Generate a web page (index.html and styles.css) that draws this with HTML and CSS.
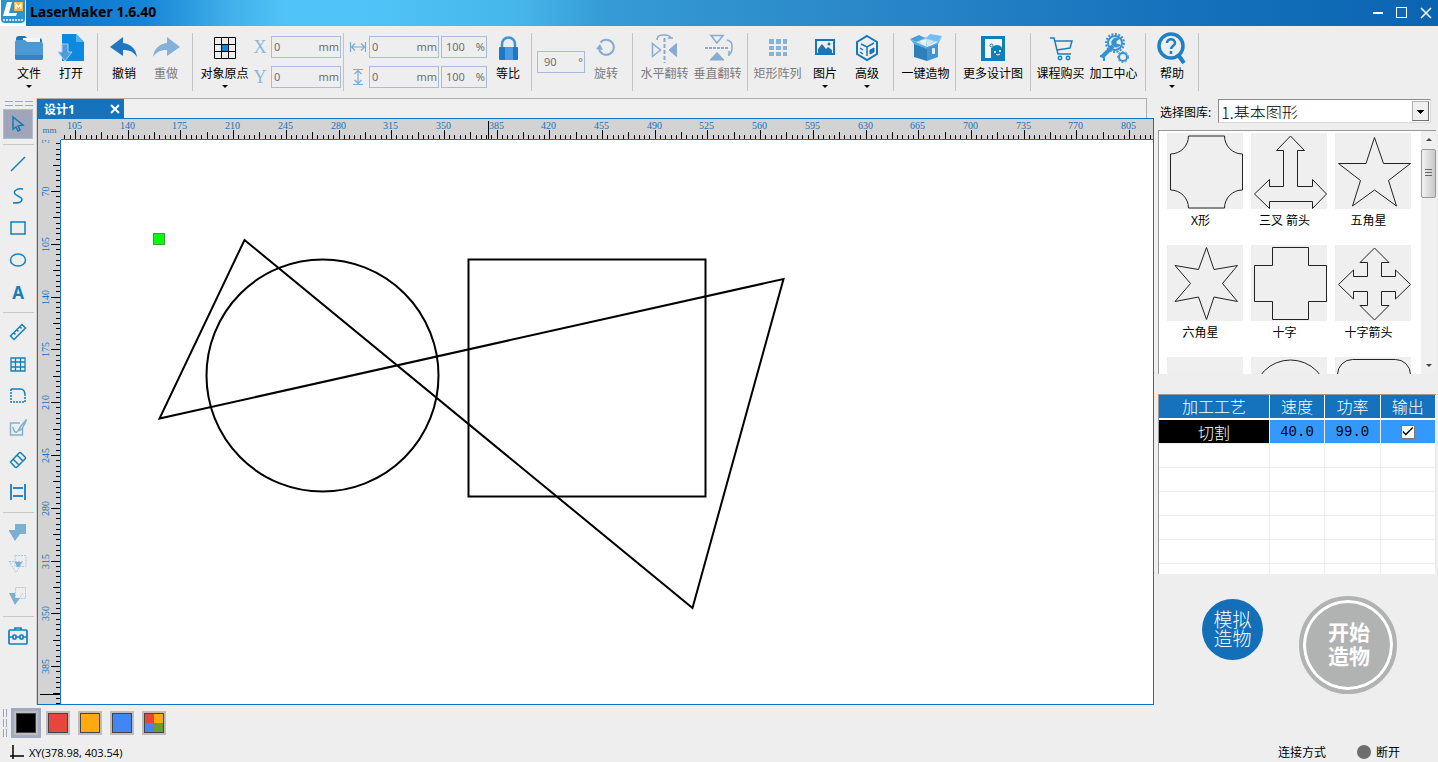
FILE: index.html
```html
<!DOCTYPE html>
<html lang="zh-CN">
<head>
    <meta charset="UTF-8">
    <meta name="viewport" content="width=device-width, initial-scale=1.0">
    <title>LaserMaker 1.6.40</title>
    <link rel="stylesheet" href="styles.css">
</head>
<body>

<header class="titlebar">
    <svg class="logo" width="26" height="26" viewBox="0 0 26 26">
        <rect width="26" height="26" fill="#fff"/>
        <rect x="1" y="-3" width="24" height="26" rx="4" fill="#2c93cf"/>
        <path d="M7 2h5l-3 11h8l-1 3H3z" fill="#fff"/>
        <rect x="14" y="2" width="9" height="9" fill="#f0b848"/>
        <path d="M16 9V4l2.500 3L21 4v5" fill="none" stroke="#fff" stroke-width="1.300"/>
        <path d="M3 20h20" stroke="#bfe2f5" stroke-width="2" stroke-dasharray="2 1"/>
    </svg>
    <h1>LaserMaker 1.6.40</h1>
    <div class="window-buttons">
        <button aria-label="最小化"><svg width="12" height="12"><path d="M1 6h10" stroke="#fff" stroke-width="2"/></svg></button>
        <button aria-label="最大化"><svg width="12" height="12"><rect x="0.500" y="0.500" width="10" height="10" fill="none" stroke="#fff"/></svg></button>
        <button aria-label="关闭"><svg width="12" height="12"><path d="M1 1l10 10M11 1L1 11" stroke="#fff" stroke-width="1.500"/></svg></button>
    </div>
</header>

<!-- 顶部工具栏 -->
<nav class="toolbar">
    <button class="tool">
        <svg width="30" height="30" viewBox="0 0 30 30">
            <path d="M2 6q0-3 3-3h6l2 2h12q3 0 3 3v6H2z" fill="#1c75b8"/>
            <rect x="9" y="5" width="17" height="5" fill="#f3f8fc"/>
            <path d="M1 9q0-2 2-2h8l2 2h14q2 0 2 2v14q0 2-2 2H3q-2 0-2-2z" fill="#4b9ad6"/>
            <path d="M1 22h28v3q0 2-2 2H3q-2 0-2-2z" fill="#3583c2"/>
        </svg>
        <span>文件</span><i class="caret"></i>
    </button>
    <button class="tool">
        <svg width="30" height="30" viewBox="0 0 30 30">
            <path d="M6 1h14l8 8v19H6z" fill="#0d8ade"/>
            <path d="M20 1v8h8z" fill="#57b2ec"/>
            <path d="M6 11h6v8h4l-7 9-7-9h4z" fill="#4d9bdd" stroke="#a9d0ee"/>
        </svg>
        <span>打开</span>
    </button>
    <i class="divider"></i>
    <button class="tool">
        <svg width="30" height="30" viewBox="0 0 30 30"><path d="M1 14L14 4v6c8 1 13 6 14 14-4-6-8-7-14-7v6z" fill="#2176bf"/></svg>
        <span>撤销</span>
    </button>
    <button class="tool off">
        <svg width="30" height="30" viewBox="0 0 30 30"><path d="M29 14L16 4v6C8 11 3 16 2 24c4-6 8-7 14-7v6z" fill="#83b1d9"/></svg>
        <span>重做</span>
    </button>
    <i class="divider"></i>
    <button class="tool wide">
        <svg width="30" height="30" viewBox="0 0 30 30">
            <rect x="11" y="12" width="7" height="7" fill="#0d8ade"/>
            <path d="M4.500 4.500h21v21h-21zM11.500 4v22M18.500 4v22M4 11.500h22M4 18.500h22" fill="none" stroke="#000"/>
        </svg>
        <span>对象原点</span><i class="caret"></i>
    </button>
    <div class="fields">
        <div class="row">
            <label class="axis" for="posX">X</label>
            <div class="field"><input id="posX" type="text" value="0"><span>mm</span></div>
        </div>
        <div class="row">
            <label class="axis" for="posY">Y</label>
            <div class="field"><input id="posY" type="text" value="0"><span>mm</span></div>
        </div>
    </div>
    <i class="divider tight"></i>
    <div class="fields">
        <div class="row">
            <label class="size" for="sizeW"><svg width="18" height="18" viewBox="0 0 18 18"><path d="M1.500 4v10M16.500 4v10M3 9h12M6 5.500L2.500 9 6 12.500M12 5.500L15.500 9 12 12.500" fill="none" stroke="#79acd6" stroke-width="1.200"/></svg></label>
            <div class="field"><input id="sizeW" type="text" value="0" aria-label="宽度"><span>mm</span></div>
            <div class="field percent"><input type="text" value="100" aria-label="宽度比例"><span>%</span></div>
        </div>
        <div class="row">
            <label class="size" for="sizeH"><svg width="18" height="18" viewBox="0 0 18 18"><path d="M4 1.500h10M4 16.500h10M9 3v12M5.500 6L9 2.500 12.500 6M5.500 12L9 15.500l3.500-3.500" fill="none" stroke="#79acd6" stroke-width="1.200"/></svg></label>
            <div class="field"><input id="sizeH" type="text" value="0" aria-label="高度"><span>mm</span></div>
            <div class="field percent"><input type="text" value="100" aria-label="高度比例"><span>%</span></div>
        </div>
    </div>
    <button class="tool">
        <svg width="30" height="30" viewBox="0 0 30 30">
            <path d="M9 16V11a6.500 6.500 0 0 1 13 0v5" fill="none" stroke="#3f93d2" stroke-width="2.500"/>
            <rect x="6" y="14" width="19" height="13" rx="1" fill="#1f78c6"/>
            <rect x="12" y="14" width="8" height="13" fill="#4a9ae0"/>
        </svg>
        <span>等比</span>
    </button>
    <i class="divider tight"></i>
    <div class="field angle"><input type="text" value="90" aria-label="旋转角度"><span>°</span></div>
    <button class="tool off">
        <svg width="30" height="30" viewBox="0 0 30 30"><path d="M9.500 9.500a7.500 7.500 0 1 1-1.500 6.500" fill="none" stroke="#87abd2" stroke-width="2"/><path d="M5 16l4-5 3 6z" fill="#87abd2"/></svg>
        <span>旋转</span>
    </button>
    <i class="divider"></i>
    <button class="tool wide off">
        <svg width="30" height="30" viewBox="0 0 30 30" stroke="#87abd2">
            <path d="M14.500 5v25" stroke-width="2" stroke-dasharray="4 2"/>
            <path d="M2.500 10.500l8 6.500-8 6.500z" fill="none" stroke-width="1.500"/>
            <path d="M26.500 10.500L19 17l7.500 6.500z" fill="#87abd2"/>
            <path d="M7 7c0-5 4-5 7-5s6 0 7 3m-3 0h5" fill="none" stroke-width="1.500"/>
        </svg>
        <span>水平翻转</span>
    </button>
    <button class="tool wide off">
        <svg width="30" height="30" viewBox="0 0 30 30" stroke="#87abd2">
            <path d="M2 15h24" stroke-width="2" stroke-dasharray="3 1"/>
            <path d="M8 2.500h12L14 10z" fill="none" stroke-width="1.500"/>
            <path d="M7 27h14l-7-7.500z" fill="#87abd2"/>
            <path d="M24 7c5 1 5 4 5 8s-1 6-4 7m1-4v5" fill="none" stroke-width="1.500"/>
        </svg>
        <span>垂直翻转</span>
    </button>
    <i class="divider near"></i>
    <button class="tool wide off">
        <svg width="30" height="30" viewBox="0 0 30 30" fill="#86b2d8">
            <path d="M6 6h5v5H6zM13 6h5v5h-5zM20 6h4v5h-4zM6 13h5v4H6zM13 13h5v4h-5zM20 13h4v4h-4zM6 19h5v4H6zM13 19h5v4h-5zM20 19h4v4h-4z"/>
        </svg>
        <span>矩形阵列</span>
    </button>
    <button class="tool">
        <svg width="30" height="30" viewBox="0 0 30 30">
            <rect x="6" y="7" width="18" height="14" fill="none" stroke="#1775bc" stroke-width="2"/>
            <path d="M8 20v-4l4-5 4 5 2-2 4 3v3z" fill="#1775bc"/><circle cx="19" cy="11" r="1.500" fill="#1775bc"/>
        </svg>
        <span>图片</span><i class="caret"></i>
    </button>
    <button class="tool">
        <svg width="30" height="30" viewBox="0 0 30 30" fill="none" stroke="#1775bc" stroke-width="2">
            <path d="M15 3l10 6v12l-10 6-10-6V9z"/>
            <path d="M9 11l6 3 7-4M15 14v9M8 15l3 2M8 19l3 2" stroke-width="1.500"/>
            <path d="M18 17l4-2v4l-4 2z" fill="#1775bc" stroke-width="1"/>
        </svg>
        <span>高级</span><i class="caret"></i>
    </button>
    <i class="divider"></i>
    <button class="tool wide">
        <svg width="34" height="30" viewBox="0 0 34 30">
            <path d="M7 8l9-4 11 4-9 5z" fill="#9cc8e8"/>
            <path d="M5 10l13 4v14L5 24z" fill="#2f7fbc"/>
            <path d="M18 14l11-4v14l-11 4z" fill="#4794d0"/>
            <path d="M10 8l7-2v8z" fill="#e6f2fa"/><path d="M17 6l8 2-7 6z" fill="#cfe5f5"/>
            <path d="M1 6l9-4 6 3-9 4z" fill="#4a9fda"/><path d="M17 5l4-4 12 2-4 6z" fill="#6ec0f7"/>
            <path d="M7 9L1 6l4 5 13 5v-2zM29 9l4-5-4 7-11 4z" fill="#5aaee8"/>
            <rect x="23" y="15" width="3" height="6" rx="1" fill="#e4f1fb"/>
        </svg>
        <span>一键造物</span>
    </button>
    <i class="divider near"></i>
    <button class="tool wider">
        <svg width="30" height="30" viewBox="0 0 30 30">
            <rect x="3" y="3" width="24" height="25" fill="#107fb8"/>
            <path d="M7 6h17v9H13v10H7z" fill="#f1f6f9"/>
            <circle cx="19" cy="18" r="6" fill="#107fb8"/><circle cx="13.500" cy="12.500" r="1.500" fill="none" stroke="#107fb8"/>
            <circle cx="17" cy="19" r="1" fill="#fff"/><circle cx="22" cy="18" r="1" fill="#fff"/><path d="M18 21.500q2 1 4-0.500" fill="none" stroke="#fff"/>
        </svg>
        <span>更多设计图</span>
    </button>
    <i class="divider near"></i>
    <button class="tool wide">
        <svg width="30" height="30" viewBox="0 0 30 30" fill="none" stroke="#1a80bd" stroke-width="1.500">
            <path d="M4 5h4l4 16h13M9 8h17l-2 7-13 2"/>
            <circle cx="14" cy="25" r="1.700"/><circle cx="22" cy="25" r="1.700"/>
        </svg>
        <span>课程购买</span>
    </button>
    <button class="tool wide">
        <svg width="32" height="30" viewBox="0 0 32 30" fill="none" stroke="#3592d2">
            <circle cx="17" cy="10" r="7" stroke-width="2"/>
            <circle cx="17" cy="10" r="9" stroke-width="2" stroke-dasharray="2 1.500"/>
            <path d="M4 24l11-11" stroke-width="4"/>
            <path d="M2 23l4 1v4" stroke-width="2"/><path d="M21 6a4.500 4.500 0 1 0 1 6l-4-1v-3z" fill="#3592d2"/>
            <circle cx="25" cy="24" r="4" stroke-width="2"/>
            <circle cx="25" cy="24" r="5.500" stroke-dasharray="2 2"/>
        </svg>
        <span>加工中心</span>
    </button>
    <i class="divider"></i>
    <button class="tool">
        <svg width="32" height="34" viewBox="0 0 32 34" fill="none" stroke="#1f80c4">
            <circle cx="15" cy="15" r="12" stroke-width="3.500"/>
            <path d="M23 25l5 7" stroke-width="4"/>
            <path d="M11 12c0-5 8-5 8 0 0 3-4 3-4 6" stroke-width="2.500"/><path d="M15 20v3" stroke-width="2.500"/>
        </svg>
        <span>帮助</span><i class="caret"></i>
    </button>
    <i class="divider"></i>
</nav>

<main class="main">
    <!-- 左侧绘图工具 -->
    <aside class="sidebar">
        <i class="grip"></i>
        <button class="side-tool selected" aria-label="选择"><svg width="18" height="18" viewBox="0 0 18 18"><path d="M4 2v12l3-2 2 4 2-1-2-4 5-1z" fill="none" stroke="#0d7bb6" stroke-width="1.500"/></svg></button>
        <i class="rule"></i>
        <button class="side-tool" aria-label="直线"><svg width="18" height="18" viewBox="0 0 18 18"><path d="M2 16L16 2" stroke="#1380bb" stroke-width="1.500"/></svg></button>
        <button class="side-tool" aria-label="曲线"><svg width="18" height="18" viewBox="0 0 18 18"><path d="M14 2C8 1 4 4 6 7c2 2 6 3 7 5 0 4-4 4-9 4" fill="none" stroke="#1380bb" stroke-width="1.500"/></svg></button>
        <button class="side-tool" aria-label="矩形"><svg width="18" height="18" viewBox="0 0 18 18"><rect x="2" y="3" width="14" height="12" fill="none" stroke="#1380bb" stroke-width="1.500"/></svg></button>
        <button class="side-tool" aria-label="椭圆"><svg width="18" height="18" viewBox="0 0 18 18"><ellipse cx="9" cy="9" rx="7.500" ry="6" fill="none" stroke="#1380bb" stroke-width="1.500"/></svg></button>
        <button class="side-tool letter" aria-label="文本">A</button>
        <i class="rule"></i>
        <button class="side-tool" aria-label="测量"><svg width="18" height="18" viewBox="0 0 18 18"><path d="M1.500 13L13 1.500 16.500 5 5 16.500zM5 10l1.500 1.500M8 7l1.500 1.500M11 4l1.500 1.500" fill="none" stroke="#1380bb" stroke-width="1.500"/></svg></button>
        <button class="side-tool" aria-label="网格"><svg width="18" height="18" viewBox="0 0 18 18"><path d="M2 3h14v13H2zM2 7h14M2 12h14M6.500 3v13M11.500 3v13" fill="none" stroke="#1380bb" stroke-width="1.300"/></svg></button>
        <button class="side-tool" aria-label="圆角"><svg width="18" height="18" viewBox="0 0 18 18" fill="none" stroke="#1380bb" stroke-width="1.500"><path d="M2 2v13h14V8" stroke-dasharray="2 1"/><path d="M2 2h9q5 0 5 6"/></svg></button>
        <button class="side-tool" aria-label="编辑节点"><svg width="18" height="18" viewBox="0 0 18 18" fill="none" stroke="#7fb2d3" stroke-width="1.500"><path d="M11 4H1.500v12h12V9M4 8q1 6 4 5"/><path d="M17 1l-5 6-3 5 4-2 4-8z"/></svg></button>
        <button class="side-tool" aria-label="橡皮擦"><svg width="18" height="18" viewBox="0 0 18 18"><path d="M1.500 11L10 2q1-1 2 0l4 4q1 1 0 2l-8 8q-1 1-2 0zM4 8l6 6M8 4l6 6" fill="none" stroke="#1380bb" stroke-width="1.500"/></svg></button>
        <button class="side-tool" aria-label="平行线"><svg width="18" height="18" viewBox="0 0 18 18"><path d="M2 1v16M16 1v16M4 5h10M4 13h10" stroke="#2a86cb" stroke-width="2"/></svg></button>
        <i class="rule"></i>
        <button class="side-tool" aria-label="并集"><svg width="20" height="20" viewBox="0 0 20 20"><path d="M7 2h11v10h-6l-5 7-6-10V8h6z" fill="#79b0d3"/></svg></button>
        <button class="side-tool" aria-label="交集"><svg width="20" height="20" viewBox="0 0 20 20"><path d="M7 1.500h11v11H7zM1 7.500h14l-7 11z" fill="none" stroke="#a6c9df" stroke-dasharray="2 1"/><path d="M7 8h7l-3 5H9z" fill="#79b0d3"/></svg></button>
        <button class="side-tool" aria-label="差集"><svg width="20" height="20" viewBox="0 0 20 20"><path d="M7.500 1.500h10v11h-10zM15 7l-4 6" fill="none" stroke="#a6c9df" stroke-dasharray="2 1"/><path d="M1 7h6v5h5l-5 7z" fill="#79b0d3"/></svg></button>
        <i class="rule"></i>
        <button class="side-tool" aria-label="工具箱"><svg width="20" height="20" viewBox="0 0 20 20" fill="none" stroke="#1380bb" stroke-width="1.700"><rect x="1" y="4" width="18" height="14" rx="1"/><path d="M7 4V2h6v2M1 11h4M8 11h4M15 11h4"/><rect x="5" y="9" width="3" height="4" rx="1"/><rect x="12" y="9" width="3" height="4" rx="1"/></svg></button>
    </aside>

    <!-- 画布 -->
    <section class="workspace">
        <div class="tabs">
            <div class="tab"><span>设计1</span><button aria-label="关闭设计1"><svg width="10" height="10"><path d="M1 1l8 8M9 1L1 9" stroke="#fff" stroke-width="2"/></svg></button></div>
        </div>
        <div class="board">
            <div class="corner">mm</div>
            <svg class="ruler-h" id="rulerH"></svg>
            <svg class="ruler-v" id="rulerV"></svg>
            <svg class="canvas">
                <g transform="translate(-61 -140)" fill="none" stroke="#000" stroke-width="2">
                    <path d="M244.500 240L692.500 608 783.500 279 159.500 418.500z"/>
                    <circle cx="322.500" cy="375.500" r="116"/>
                    <rect x="468.500" y="259.500" width="237" height="237"/>
                    <rect x="153.500" y="233.500" width="11" height="11" fill="#00ff00" stroke="#3f9c3f" stroke-width="1"/>
                </g>
            </svg>
        </div>
    </section>

    <!-- 右侧面板 -->
    <aside class="panel">
        <div class="picker">
            <label for="gallery">选择图库:</label>
            <div class="select">
                <select id="gallery"><option>1.基本图形</option></select>
                <i class="arrow"></i>
            </div>
        </div>

        <div class="library">
            <div class="shapes">
                <figure><svg viewBox="0 0 76 76"><path d="M21.500 3h36a18 18 0 0 0 18 18v36a18 18 0 0 0-18 18h-36a18 18 0 0 0-18-18V21a18 18 0 0 0 18-18z"/></svg><figcaption>X形</figcaption></figure>
                <figure><svg viewBox="0 0 76 76"><path d="M39.500 3l14 14.500h-7v36h15v-7l14 14.500-14 14.500v-7h-43v7L3.500 61l15-14.500v7h14v-36h-7z"/></svg><figcaption>三叉 箭头</figcaption></figure>
                <figure><svg viewBox="0 0 76 76"><path d="M39.500 4.500l9 26h27l-22 17 8 25.500-22-16-22 16 8-25.500-22-17H31z"/></svg><figcaption>五角星</figcaption></figure>
                <figure><svg viewBox="0 0 76 76"><path d="M39.500 2.500l7.500 22 23.500-4-15 18 15 18L47 52l-7.500 22.500-8-22.500L8 56.500l15.500-18L8 20.500l23.500 4z"/></svg><figcaption>六角星</figcaption></figure>
                <figure><svg viewBox="0 0 76 76"><path d="M21.500 2.500h36v18h18v36h-18v18h-36v-18h-18v-36h18z"/></svg><figcaption>十字</figcaption></figure>
                <figure><svg viewBox="0 0 76 76"><path d="M39.500 3L54 17.500h-7.500v14h14V25l15 14.500-15 14.500v-7.500h-14v14H54L39.500 75 25 60.500h7.500v-14h-14V54L3.500 39.500 18.500 25v6.500h14v-14H25z"/></svg><figcaption>十字箭头</figcaption></figure>
                <figure><svg viewBox="0 0 76 76"></svg></figure>
                <figure><svg viewBox="0 0 76 76"><circle cx="39.500" cy="40" r="37"/></svg></figure>
                <figure><svg viewBox="0 0 76 76"><rect x="2.500" y="2.500" width="73" height="73" rx="15"/></svg></figure>
            </div>
            <div class="scrollbar">
                <i class="up"></i>
                <div class="thumb"></div>
                <i class="down"></i>
            </div>
        </div>

        <div class="process">
            <table>
                <thead>
                    <tr><th class="name">加工工艺</th><th>速度</th><th>功率</th><th>输出</th></tr>
                </thead>
                <tbody>
                    <tr class="active"><td class="name">切割</td><td>40.0</td><td>99.0</td><td><input type="checkbox" aria-label="输出" checked></td></tr>
                    <tr><td></td><td></td><td></td><td></td></tr>
                    <tr><td></td><td></td><td></td><td></td></tr>
                    <tr><td></td><td></td><td></td><td></td></tr>
                    <tr><td></td><td></td><td></td><td></td></tr>
                    <tr><td></td><td></td><td></td><td></td></tr>
                    <tr><td></td><td></td><td></td><td></td></tr>
                </tbody>
            </table>
        </div>

        <div class="actions">
            <button class="simulate">模拟<br>造物</button>
            <button class="start">开始<br>造物</button>
        </div>
    </aside>
</main>

<footer>
    <div class="colors">
        <i class="grip"></i>
        <button class="swatch selected" aria-label="黑色"><i class="black"></i></button>
        <button class="swatch" aria-label="红色"><i class="red"></i></button>
        <button class="swatch" aria-label="黄色"><i class="yellow"></i></button>
        <button class="swatch" aria-label="蓝色"><i class="blue"></i></button>
        <button class="swatch" aria-label="更多颜色"><i class="mixed"></i></button>
    </div>
    <div class="status">
        <svg width="14" height="14" viewBox="0 0 14 14"><path d="M3 0v14M0 11h14" stroke="#000" stroke-width="1.500"/></svg>
        <span class="coords">XY(378.98, 403.54)</span>
        <span class="connect">连接方式</span>
        <i class="dot"></i>
        <span>断开</span>
    </div>
</footer>

<script src="ruler.js"></script>
</body>
</html>
```
FILE: styles.css
```css
:root {
    --blue: #1572bd;
    --bg: #eeeeee;
    --line: #c3c3c3;
    --ruler: #d3d3d3;
}

* {
    box-sizing: border-box;
}

body {
    margin: 0;
    height: 100vh;
    display: flex;
    flex-direction: column;
    overflow: hidden;
    background: var(--bg);
    color: #000;
    font-family: "Noto Sans", "Noto Sans CJK SC", sans-serif;
    font-size: 12px;
}

button {
    padding: 0;
    border: none;
    background: none;
    color: inherit;
    font: inherit;
}

i {
    display: block;
    flex-shrink: 0;
}

svg {
    display: block;
}

/* 标题栏 */
.titlebar {
    flex-shrink: 0;
    display: flex;
    align-items: center;
    height: 26px;
    background: linear-gradient(90deg, #0a6fc6, #1584d6 10%, #42b0ea 16%, #50c4f8 20%, #50c4f8 25%, #46b6ea 36%, #359bd5 42%, #2a88c9 60%, #1873bd 80%, #0a64b2);
}

.titlebar h1 {
    flex: 1;
    margin: 0 0 3px 4px;
    font-size: 14px;
    font-weight: bold;
}

.window-buttons {
    display: flex;
    gap: 12px;
    padding-right: 6px;
}

/* 工具栏 */
.toolbar {
    flex-shrink: 0;
    display: flex;
    align-items: flex-start;
    height: 72px;
    padding: 5px 0 0 8px;
}

.tool {
    flex-shrink: 0;
    display: flex;
    flex-direction: column;
    align-items: center;
    width: 42px;
    line-height: 18px;
    white-space: nowrap;
}

.tool svg {
    height: 34px;
}

.tool.wide {
    width: 53px;
}

.tool.wider {
    width: 68px;
}

.tool.off {
    color: #7c7c7c;
}

.caret {
    margin-top: 2px;
    border: 3px solid transparent;
    border-top-color: #000;
    border-bottom: none;
}

.divider {
    width: 1px;
    height: 58px;
    margin: 2px 5px 0;
    background: var(--line);
}

.divider.tight {
    margin: 2px 2px 0;
}

.divider.near {
    margin: 2px 3px 0;
}

.fields {
    display: flex;
    flex-direction: column;
    gap: 8px;
    padding-top: 5px;
}

.row {
    display: flex;
    align-items: center;
    gap: 2px;
}

.axis {
    width: 18px;
    color: #8bb8dc;
    font: 18px/22px "Liberation Serif", serif;
    text-align: center;
}

.size {
    width: 21px;
    padding-left: 3px;
}

.field {
    display: flex;
    align-items: center;
    width: 70px;
    height: 22px;
    padding: 0 1px 2px 2px;
    border: 1px solid #a9bcd9;
    color: #6e6e6e;
    font-size: 11px;
}

.field input {
    flex: 1;
    min-width: 0;
    padding: 0;
    border: none;
    outline: none;
    background: none;
    color: inherit;
    font: inherit;
}

.field.percent {
    width: 46px;
    padding-left: 4px;
}

.field.angle {
    width: 48px;
    margin: 20px 0 0 3px;
    padding-left: 6px;
}

/* 左侧工具 */
.main {
    flex: 1;
    min-height: 0;
    display: flex;
}

.sidebar {
    flex-shrink: 0;
    display: flex;
    flex-direction: column;
    gap: 2px;
    width: 37px;
    padding: 3px 0 0 3px;
    border-right: 1px solid #d0d0d0;
}

.sidebar .grip {
    width: 29px;
    height: 5px;
    margin: 0 0 1px 2px;
    border: 1px solid #9fa5bf;
    border-width: 1px 0;
    mask-image: repeating-linear-gradient(90deg, #000 0 8px, transparent 8px 10px);
}

.side-tool {
    flex-shrink: 0;
    display: flex;
    align-items: center;
    justify-content: center;
    width: 30px;
    height: 30px;
}

.side-tool.selected {
    border: 1px solid #b5b9cf;
    background: #a0a5ba;
}

.side-tool.letter {
    color: #1380bb;
    font: bold 17px "Open Sans", sans-serif;
}

.rule {
    width: 31px;
    height: 1px;
    margin: 3px 0 2px;
    background: #c8c8c8;
}

/* 工作区 */
.workspace {
    flex: 1;
    min-width: 0;
    display: flex;
    flex-direction: column;
}

.tabs {
    height: 20px;
    margin-right: 7px;
    border: 1px solid #adadad;
    border-width: 1px 1px 0 0;
    background: #f0f0f0;
}

.tab {
    display: flex;
    align-items: center;
    justify-content: space-between;
    width: 87px;
    height: 19px;
    padding: 0 4px 0 7px;
    background: var(--blue);
    color: #fff;
    font-weight: bold;
}

.board {
    flex: 1;
    min-height: 0;
    display: grid;
    grid-template: 21px 1fr / 23px 1fr;
    border: 1px solid var(--blue);
    background: var(--ruler);
}

.corner {
    color: var(--blue);
    font: 9px/23px "Liberation Serif", serif;
    text-align: center;
}

.ruler-h,
.ruler-v,
.canvas {
    width: 100%;
    height: 100%;
    overflow: hidden;
}

.ruler-h {
    border-bottom: 1px solid var(--blue);
}

.ruler-v {
    border-right: 1px solid var(--blue);
}

.ruler-h text,
.ruler-v text {
    fill: var(--blue);
    font: 10px "Liberation Serif", serif;
    text-anchor: middle;
}

.ruler-h path,
.ruler-v path {
    stroke: #000;
    shape-rendering: crispEdges;
}

.canvas {
    background: #fff;
}

/* 右侧面板 */
.panel {
    flex-shrink: 0;
    display: flex;
    flex-direction: column;
    width: 284px;
    padding: 1px 2px 0 4px;
}

.picker {
    display: flex;
    align-items: center;
    gap: 7px;
    padding: 0 5px 0 2px;
    white-space: nowrap;
}

.picker label {
    padding-top: 2px;
}

.select {
    flex: 1;
    display: flex;
    height: 24px;
    border: 1px solid #8a8a8a;
    border-right-color: #d8d8d8;
    border-bottom-color: #d8d8d8;
    background: #fff;
}

.select select {
    flex: 1;
    padding: 0 2px 3px;
    border: none;
    appearance: none;
    background: none;
    color: #000;
    font: 300 16px "Noto Sans CJK SC", sans-serif;
}

.select .arrow {
    width: 17px;
    margin: 1px;
    border: 1px solid #b0b0b0;
    border-right-color: #707070;
    border-bottom-color: #707070;
    background: linear-gradient(#000, #000) 4px 8px / 7px 1px no-repeat,
                linear-gradient(#000, #000) 5px 9px / 5px 1px no-repeat,
                linear-gradient(#000, #000) 6px 10px / 3px 1px no-repeat,
                linear-gradient(#000, #000) 7px 11px / 1px 1px no-repeat,
                #f0f0f0;
}

.library {
    display: flex;
    height: 244px;
    margin-top: 7px;
    overflow: hidden;
    border: 1px solid #999;
    border-width: 1px 0 0 1px;
    background: #fff;
}

.shapes {
    flex: 1;
    display: grid;
    grid-template-columns: repeat(3, 76px);
    grid-auto-rows: 104px;
    gap: 8px;
    padding: 2px 0 0 8px;
}

.shapes figure {
    margin: 0;
}

.shapes svg {
    width: 76px;
    height: 76px;
    background: #efefef;
    fill: none;
    stroke: #222;
}

.shapes figcaption {
    padding-right: 9px;
    line-height: 24px;
    text-align: center;
    white-space: nowrap;
}

.scrollbar {
    width: 15px;
    display: flex;
    flex-direction: column;
    align-items: center;
    background: #f0f0f0;
}

.scrollbar .up {
    margin: 7px 0 8px;
    border: 3px solid transparent;
    border-top: none;
    border-bottom-color: #444;
}

.scrollbar .thumb {
    width: 15px;
    height: 49px;
    border: 1px solid #999;
    border-radius: 2px;
    background: repeating-linear-gradient(#666 0 1px, transparent 1px 3px) 3px 19px / 7px 8px no-repeat,
                linear-gradient(90deg, #f4f4f4, #dcdcdc 50%, #c9c9c9);
}

.scrollbar .down {
    margin: auto 0 7px;
    border: 3px solid transparent;
    border-bottom: none;
    border-top-color: #444;
}

.process {
    height: 180px;
    margin-top: 20px;
    overflow: hidden;
    border: 1px solid #999;
    border-width: 1px 0 0 1px;
    background: #fff;
}

.process table {
    width: 100%;
    table-layout: fixed;
    border-spacing: 0;
    font-size: 16px;
    line-height: 22px;
}

.process th,
.process td {
    width: 55px;
    height: 24px;
    padding: 0;
    border: 1px solid #ececec;
    border-width: 0 1px 1px 0;
    text-align: center;
}

.process th.name {
    width: 110px;
}

.process th {
    height: 25px;
    border-color: #fff;
    border-bottom-width: 2px;
    background: var(--blue);
    color: #fff;
    font-weight: 300;
}

.process .active td {
    background: #3399ff;
    font-family: "Liberation Mono", monospace;
    font-size: 14px;
}

.process .active .name {
    background: #000;
    color: #fff;
    font-family: "Noto Sans CJK SC", sans-serif;
    font-size: 16px;
    font-weight: 300;
}

.process input {
    appearance: none;
    display: block;
    width: 14px;
    height: 14px;
    margin: 0 auto;
    border: 1px solid #777;
    background: #fff;
}

.process input:checked::before {
    content: "";
    display: block;
    height: 12px;
    background: #000;
    clip-path: polygon(1px 5px, 4px 8px, 11px 1px, 11px 3px, 4px 10px, 1px 7px);
}

.actions {
    display: flex;
    justify-content: flex-end;
    align-items: flex-start;
    gap: 36px;
    padding: 22px 39px 0 0;
}

.simulate {
    width: 61px;
    height: 61px;
    margin-top: 3px;
    border-radius: 50%;
    background: #146fb9;
    color: #fff;
    font-size: 19px;
    font-weight: 300;
    line-height: 19px;
}

.start {
    width: 98px;
    height: 98px;
    padding: 0 0 2px 2px;
    border: 4px solid #b1b3b3;
    border-radius: 50%;
    background: #b1b3b3;
    box-shadow: inset 0 0 0 3px #fff;
    color: #fff;
    font-size: 21px;
    font-weight: bold;
    line-height: 24px;
}

/* 底部 */
.colors {
    display: flex;
    align-items: center;
    gap: 8px;
    height: 36px;
    padding-left: 3px;
}

.colors .grip {
    width: 4px;
    height: 28px;
    border: 1px solid #9fa5bf;
    border-width: 0 1px;
    mask-image: repeating-linear-gradient(#000 0 8px, transparent 8px 10px);
}

.swatch {
    width: 24px;
    height: 24px;
    padding: 2px;
    background: #bdbdbd;
}

.swatch.selected {
    margin: 0 0 0 -1px;
    outline: 3px solid #a3a9bf;
}

.swatch i {
    height: 20px;
    border: 1px solid #444;
}

.swatch .black { background: #000; }
.swatch .red { background: #e8453c; }
.swatch .yellow { background: #ffab0f; }
.swatch .blue { background: #4285f4; }
.swatch .mixed { background: conic-gradient(#ffab0f 25%, #689f2a 25% 50%, #4285f4 50% 75%, #e8453c 75%); }

.status {
    display: flex;
    align-items: center;
    height: 21px;
    padding: 1px 38px 0 10px;
}

.coords {
    flex: 1;
    padding-left: 5px;
    font-family: "Open Sans", sans-serif;
    font-size: 11px;
}

.dot {
    width: 14px;
    height: 14px;
    margin: 0 5px 0 31px;
    border-radius: 50%;
    background: #6d6d6d;
}
```
FILE: ruler.js
```javascript
// 每35mm一个主刻度，中间分为10小格
const STEP = 35;
const MAJOR_H = 52.7;
const MAJOR_V = 52.8;

function tickLength(i) {
    if (i % 10 === 0) return 9;
    return i % 5 === 0 ? 7 : 4;
}

// 水平标尺
function drawHorizontal() {
    const svg = document.getElementById('rulerH');
    const width = svg.clientWidth;
    let ticks = '';
    let labels = '';
    for (let i = -2; ; i++) {
        const x = Math.round(14 + i * MAJOR_H / 10) + 0.5;
        if (x > width) break;
        ticks += `M${x} 20v-${tickLength(i)}`;
        if (i % 10 === 0) {
            labels += `<text x="${x - 1}" y="10">${105 + i / 10 * STEP}</text>`;
        }
    }
    // 当前光标位置
    ticks += 'M427.5 2v18';
    svg.innerHTML = `<path d="${ticks}"/>${labels}`;
}

// 垂直标尺
function drawVertical() {
    const svg = document.getElementById('rulerV');
    const height = svg.clientHeight;
    let ticks = '';
    let labels = '';
    for (let i = -10; ; i++) {
        const y = Math.round(51 + i * MAJOR_V / 10) + 0.5;
        if (y > height) break;
        ticks += `M22 ${y}h-${tickLength(i)}`;
        if (i % 10 === 0) {
            labels += `<text transform="translate(11 ${y}) rotate(-90)">${70 + i / 10 * STEP}</text>`;
        }
    }
    ticks += 'M2 554.5h20';
    svg.innerHTML = `<path d="${ticks}"/>${labels}`;
}

function drawRulers() {
    drawHorizontal();
    drawVertical();
}

window.addEventListener('resize', drawRulers);
drawRulers();
```
